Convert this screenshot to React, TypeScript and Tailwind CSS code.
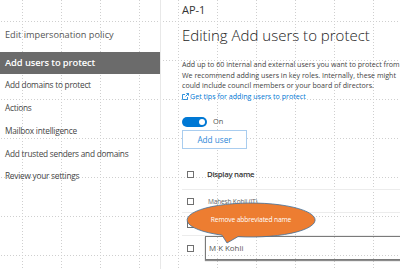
import React from 'react';

const navItems = [
  'Add domains to protect',
  'Actions',
  'Mailbox intelligence',
  'Add trusted senders and domains',
  'Review your settings',
];

const Checkbox = () => <span className="block w-[7px] h-[7px] border border-[#707070] bg-white shrink-0" />;

const GridBackground = () => (
  <svg className="absolute inset-0" width="400" height="269">
    <defs>
      <pattern id="dots" x="22" y="21" width="39" height="39" patternUnits="userSpaceOnUse">
        <line x1="0" y1="0.5" x2="39" y2="0.5" stroke="#cfcfcf" strokeWidth="1" strokeDasharray="1 2" />
        <line x1="0.5" y1="0" x2="0.5" y2="39" stroke="#cfcfcf" strokeWidth="1" strokeDasharray="1 2" />
      </pattern>
    </defs>
    <rect width="400" height="269" fill="url(#dots)" />
  </svg>
);

const Callout = () => (
  <div className="absolute left-[185px] top-[200px] w-[134px] h-[45px]">
    <svg width="134" height="45" className="absolute inset-0">
      <path
        d="M 37 35.15 A 64 17 0 1 1 53 36.65 L 42 43 Z"
        fill="#ed7d31"
        stroke="#41719c"
        strokeWidth="0.8"
      />
    </svg>
    <div className="absolute left-0 top-0 w-[132px] h-[40px] flex items-center justify-center text-white text-[6.7px] tracking-[-0.15px]">
      Remove abbreviated name
    </div>
  </div>
);

export default function App() {
  return (
    <div className="relative w-[400px] h-[269px] overflow-hidden bg-white font-['Open_Sans','Noto_Sans',sans-serif] text-[#333]">
      <GridBackground />
      <div className="relative flex h-full">
        <aside className="w-[161px] shrink-0 border-r border-[#e8e8e8]">
          <div className="pt-[27px] pl-[5px] leading-[16px] text-[9.2px] text-[#555]">Edit impersonation policy</div>
          <div className="mt-[9px] h-[22px] w-[160px] bg-[#6b6b6b] flex items-center pl-[5px] text-white font-semibold text-[9.4px] tracking-[-0.1px]">
            Add users to protect
          </div>
          {navItems.map((item) => (
            <div key={item} className="h-[22.8px] flex items-center pl-[5px] text-[8.3px] tracking-[-0.25px] text-[#444]">
              {item}
            </div>
          ))}
        </aside>

        <main className="flex-1 pl-[21px] pt-[3px] whitespace-nowrap">
          <div className="leading-[14px] text-[11px] text-[#333]">AP-1</div>
          <h1 className="mt-[8px] leading-[20px] text-[15px] font-light text-[#222]">Editing Add users to protect</h1>

          <div className="mt-[14px] text-[7.1px] leading-[10.6px] text-[#444]">
            <div>Add up to 60 internal and external users you want to protect from</div>
            <div>We recommend adding users in key roles. Internally, these might</div>
            <div>could include council members or your board of directors.</div>
            <div className="flex items-center text-[#0078d4]">
              <svg width="7" height="7" viewBox="0 0 7 7" className="mr-[1px]">
                <path d="M3 1.5H0.5V6.5H5.5V4" fill="none" stroke="#0078d4" strokeWidth="0.8" />
                <path d="M3.5 3.5L6.5 0.5M4.3 0.5H6.5V2.7" fill="none" stroke="#0078d4" strokeWidth="0.8" />
              </svg>
              Get tips for adding users to protect
            </div>
          </div>

          <div className="mt-[15px] flex items-center gap-[6px]">
            <div className="w-[25px] h-[10px] rounded-full bg-[#0078d4] flex items-center justify-end pr-[2px]">
              <span className="block w-[6px] h-[6px] rounded-full bg-white" />
            </div>
            <span className="text-[7.4px] text-[#555]">On</span>
          </div>

          <button className="mt-[3px] w-[65px] h-[19px] border border-[#a9cdef] bg-white text-[#2b88d8] text-[8.2px] flex items-center justify-center">
            Add user
          </button>

          <div className="mt-[11px] w-[260px]">
            <div className="h-[30px] flex items-center border-b border-[#ececec] pl-[5px] gap-[13px]">
              <Checkbox />
              <span className="text-[7.8px] tracking-[-0.3px] font-semibold text-[#333]">Display name</span>
            </div>
            <div className="h-[23px] flex items-center border-b border-[#ececec] pl-[5px] gap-[14px]">
              <Checkbox />
              <span className="text-[6.6px] tracking-[-0.2px] text-[#666]">Mahesh Kohli (IT)</span>
            </div>
            <div className="h-[23px] flex items-center border-b border-[#ececec] pl-[5px]">
              <Checkbox />
            </div>
            <div className="h-[24px] flex items-center pl-[5px] gap-[11px]">
              <Checkbox />
              <div className="flex-1 h-[24px] border border-[#7a7a7a] shadow-[0_1px_1px_rgba(0,0,0,0.45)] flex items-center pl-[3px] text-[7.9px] text-[#555]">
                M K Kohli
              </div>
            </div>
          </div>
        </main>
      </div>
      <Callout />
    </div>
  );
}
